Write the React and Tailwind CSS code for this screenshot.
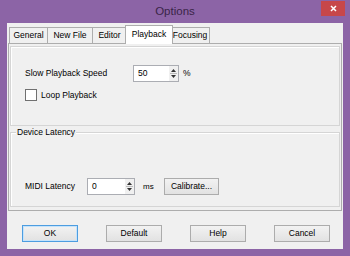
import React from 'react'

const font = { fontFamily: '"Liberation Sans", Arial, sans-serif' }

function Spin({ value, width }) {
    return (
        <div className={`flex h-[17px] ${width} items-stretch border border-[#abadb3] bg-white`}>
            <span className='flex-1 pl-[4px] text-[8.5px] leading-[15px] text-black'>{value}</span>
            <div className='flex w-[9px] flex-col items-center justify-center gap-[1px] bg-[#f0f0f0]'>
                <svg width='5' height='3' viewBox='0 0 5 3'><path d='M2.5 0L5 3H0z' fill='#333' /></svg>
                <div className='h-[1px] w-[7px] bg-[#bbb]' />
                <svg width='5' height='3' viewBox='0 0 5 3'><path d='M0 0h5L2.5 3z' fill='#333' /></svg>
            </div>
        </div>
    )
}

function Btn({ children, focused, className = '' }) {
    return (
        <div className={`flex h-[17px] items-center justify-center border text-[8.5px] text-black bg-gradient-to-b from-[#f2f2f2] to-[#e2e2e2] ${focused ? 'border-[#4d9de0] shadow-[inset_0_0_0_1px_#c5e3fb]' : 'border-[#acacac]'} ${className}`}>
            {children}
        </div>
    )
}

function Tab({ label, active, width }) {
    if (active) {
        return (
            <div className={`relative z-10 -mb-[1px] -mx-[2px] flex h-[19px] ${width} justify-center border border-b-0 border-[#adadad] bg-white pt-[2px] text-[8.5px] text-black`}>
                {label}
            </div>
        )
    }
    return (
        <div className={`flex h-[16px] ${width} items-center justify-center border border-b-0 border-l-0 first:border-l border-[#adadad] bg-[#f0f0f0] text-[8.5px] text-black`}>
            {label}
        </div>
    )
}

export default function App() {
    const tabs = [
        ['General', 'w-[39px]'],
        ['New File', 'w-[45px]'],
        ['Editor', 'w-[34px]'],
        ['Playback', 'w-[48px]'],
        ['Focusing', 'w-[39px]'],
    ]

    return (
        <div className='flex h-[256px] w-[350px] flex-col bg-[#8c64a6]' style={font}>
            <div className='relative flex h-[23px] items-center justify-center'>
                <span className='text-[11.5px] text-[#3a2548]'>Options</span>
                <div className='absolute right-[5px] top-[1px] flex h-[15px] w-[24px] items-center justify-center bg-[#c7474a]'>
                    <svg width='7' height='7' viewBox='0 0 7 7'>
                        <path d='M1 1L6 6M6 1L1 6' stroke='white' strokeWidth='1.5' />
                    </svg>
                </div>
            </div>

            <div className='mx-[7px] mb-[7px] flex flex-1 flex-col bg-[#f0f0f0] px-[1px] pt-[2px]'>
                <div className='flex items-end pl-[1px]'>
                    {tabs.map(([t, w]) => (
                        <Tab key={t} label={t} width={w} active={t === 'Playback'} />
                    ))}
                </div>

                <div className='flex h-[168px] flex-col gap-[6px] border border-[#adadad] bg-[#f0f0f0] px-[1px] pt-[2px]'>
                    <div className='flex h-[80px] flex-col border border-[#d5d5d5] shadow-[inset_1px_1px_0_#fff] px-[14px] pt-[18px]'>
                        <div className='flex items-center'>
                            <span className='w-[108px] whitespace-nowrap text-[8.5px] text-black'>Slow Playback Speed</span>
                            <Spin value='50' width='w-[46px]' />
                            <span className='ml-[4px] text-[8.5px] text-black'>%</span>
                        </div>
                        <div className='mt-[7px] flex items-center gap-[4px] pl-[0px]'>
                            <div className='h-[12px] w-[12px] border border-[#707070] bg-white' />
                            <span className='text-[8.5px] text-black'>Loop Playback</span>
                        </div>
                    </div>

                    <div className='relative flex h-[75px] flex-col justify-end border border-[#d5d5d5] shadow-[inset_1px_1px_0_#fff] px-[14px] pb-[11px]'>
                        <span className='absolute -top-[7px] left-[5px] bg-[#f0f0f0] px-[1px] text-[8.5px] leading-[12px] text-black'>Device Latency</span>
                        <div className='flex items-center'>
                            <span className='w-[62px] whitespace-nowrap text-[8.5px] text-black'>MIDI Latency</span>
                            <Spin value='0' width='w-[48px]' />
                            <span className='ml-[8px] w-[21px] text-[8px] text-black'>ms</span>
                            <Btn className='w-[55px]'>Calibrate...</Btn>
                        </div>
                    </div>
                </div>

                <div className='flex justify-between pl-[14px] pr-[12px] pt-[14px]'>
                    <Btn focused className='w-[56px]'>OK</Btn>
                    <Btn className='w-[56px]'>Default</Btn>
                    <Btn className='w-[56px]'>Help</Btn>
                    <Btn className='w-[56px]'>Cancel</Btn>
                </div>
            </div>
        </div>
    )
}
